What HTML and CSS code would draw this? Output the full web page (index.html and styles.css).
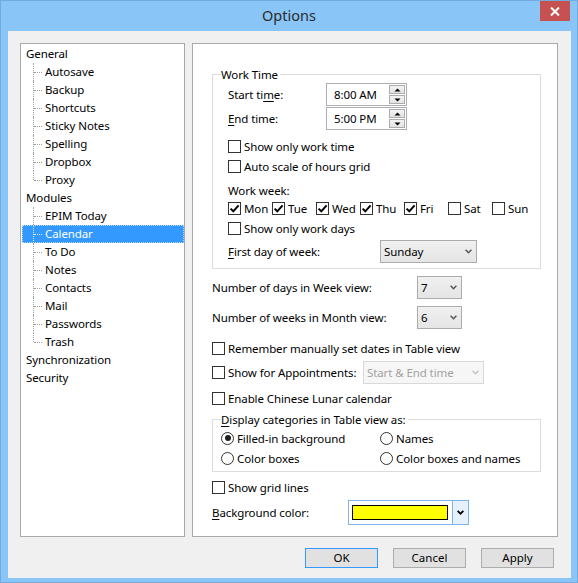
FILE: index.html
```html
<!DOCTYPE html>
<html lang="en">
<head>
<meta charset="utf-8">
<title>Options</title>
<link rel="stylesheet" href="styles.css">
</head>
<body>
<div class="window">
  <header class="titlebar">
    <div class="title">Options</div>
    <div class="close" aria-label="Close">
      <svg width="10" height="9" viewBox="0 0 10 9"><path d="M1 0.5 L9 8.5 M9 0.5 L1 8.5" stroke="#fff" stroke-width="2" fill="none"/></svg>
    </div>
  </header>
  <div class="client">
    <div class="main">
      <div class="tree">
        <div class="node">General</div>
        <div class="kids">
          <div class="leaf">Autosave</div>
          <div class="leaf">Backup</div>
          <div class="leaf">Shortcuts</div>
          <div class="leaf">Sticky Notes</div>
          <div class="leaf">Spelling</div>
          <div class="leaf">Dropbox</div>
          <div class="leaf">Proxy</div>
        </div>
        <div class="node">Modules</div>
        <div class="kids">
          <div class="leaf">EPIM Today</div>
          <div class="leaf selected">Calendar</div>
          <div class="leaf">To Do</div>
          <div class="leaf">Notes</div>
          <div class="leaf">Contacts</div>
          <div class="leaf">Mail</div>
          <div class="leaf">Passwords</div>
          <div class="leaf">Trash</div>
        </div>
        <div class="node">Synchronization</div>
        <div class="node">Security</div>
      </div>

      <div class="panel">
        <div class="group work">
          <div class="group-title">Work Time</div>
          <div class="row time-row">
            <span class="lbl lbl-time">Start ti<u>m</u>e:</span>
            <div class="spin">
              <span class="spin-val">8:00 AM</span>
              <span class="spin-btns">
                <span class="sb"><svg width="7" height="4" viewBox="0 0 7 4"><path d="M0.5 3.5 L3.5 0.5 L6.5 3.5Z" fill="#000"/></svg></span>
                <span class="sb"><svg width="7" height="4" viewBox="0 0 7 4"><path d="M0.5 0.5 L3.5 3.5 L6.5 0.5Z" fill="#000"/></svg></span>
              </span>
            </div>
          </div>
          <div class="row time-row">
            <span class="lbl lbl-time"><u>E</u>nd time:</span>
            <div class="spin">
              <span class="spin-val">5:00 PM</span>
              <span class="spin-btns">
                <span class="sb"><svg width="7" height="4" viewBox="0 0 7 4"><path d="M0.5 3.5 L3.5 0.5 L6.5 3.5Z" fill="#000"/></svg></span>
                <span class="sb"><svg width="7" height="4" viewBox="0 0 7 4"><path d="M0.5 0.5 L3.5 3.5 L6.5 0.5Z" fill="#000"/></svg></span>
              </span>
            </div>
          </div>
          <div class="row chk-row first-chk"><span class="chk"></span><span>Show only work time</span></div>
          <div class="row chk-row"><span class="chk"></span><span>Auto scale of hours grid</span></div>
          <div class="row ww-label">Work week:</div>
          <div class="row days">
            <span class="day"><span class="chk"><svg width="11" height="11" viewBox="0 0 11 11"><path d="M1.6 5.6 L4.3 8.3 L9.6 2.4" fill="none" stroke="#000" stroke-width="2"/></svg></span>Mon</span>
            <span class="day"><span class="chk"><svg width="11" height="11" viewBox="0 0 11 11"><path d="M1.6 5.6 L4.3 8.3 L9.6 2.4" fill="none" stroke="#000" stroke-width="2"/></svg></span>Tue</span>
            <span class="day"><span class="chk"><svg width="11" height="11" viewBox="0 0 11 11"><path d="M1.6 5.6 L4.3 8.3 L9.6 2.4" fill="none" stroke="#000" stroke-width="2"/></svg></span>Wed</span>
            <span class="day"><span class="chk"><svg width="11" height="11" viewBox="0 0 11 11"><path d="M1.6 5.6 L4.3 8.3 L9.6 2.4" fill="none" stroke="#000" stroke-width="2"/></svg></span>Thu</span>
            <span class="day"><span class="chk"><svg width="11" height="11" viewBox="0 0 11 11"><path d="M1.6 5.6 L4.3 8.3 L9.6 2.4" fill="none" stroke="#000" stroke-width="2"/></svg></span>Fri</span>
            <span class="day"><span class="chk"></span>Sat</span>
            <span class="day"><span class="chk"></span>Sun</span>
          </div>
          <div class="row chk-row"><span class="chk"></span><span>Show only work days</span></div>
          <div class="row combo-row first-day">
            <span class="lbl lbl-first"><u>F</u>irst day of week:</span>
            <div class="combo combo-day"><span>Sunday</span><svg width="7" height="5" viewBox="0 0 7 5"><path d="M0.6 0.8 L3.5 3.7 L6.4 0.8" fill="none" stroke="#555" stroke-width="1.5"/></svg></div>
          </div>
        </div>

        <div class="row combo-row count-row">
          <span class="lbl lbl-count">Number of days in Week view:</span>
          <div class="combo combo-num"><span>7</span><svg width="7" height="5" viewBox="0 0 7 5"><path d="M0.6 0.8 L3.5 3.7 L6.4 0.8" fill="none" stroke="#555" stroke-width="1.5"/></svg></div>
        </div>
        <div class="row combo-row count-row">
          <span class="lbl lbl-count">Number of weeks in Month view:</span>
          <div class="combo combo-num"><span>6</span><svg width="7" height="5" viewBox="0 0 7 5"><path d="M0.6 0.8 L3.5 3.7 L6.4 0.8" fill="none" stroke="#555" stroke-width="1.5"/></svg></div>
        </div>
        <div class="row chk-row remember"><span class="chk"></span><span>Remember manually set dates in Table view</span></div>
        <div class="row combo-row appt">
          <span class="chk"></span><span class="lbl lbl-appt">Show for Appointments:</span>
          <div class="combo combo-appt disabled"><span>Start &amp; End time</span><svg width="7" height="5" viewBox="0 0 7 5"><path d="M0.6 0.8 L3.5 3.7 L6.4 0.8" fill="none" stroke="#C4C4C4" stroke-width="1.5"/></svg></div>
        </div>
        <div class="row chk-row lunar"><span class="chk"></span><span>Enable Chinese Lunar calendar</span></div>

        <div class="group display">
          <div class="group-title"><u>D</u>isplay categories in Table view as:</div>
          <div class="radios">
            <div class="row chk-row"><span class="radio on"></span><span>Filled-in background</span></div>
            <div class="row chk-row"><span class="radio"></span><span>Names</span></div>
            <div class="row chk-row"><span class="radio"></span><span>Color boxes</span></div>
            <div class="row chk-row"><span class="radio"></span><span>Color boxes and names</span></div>
          </div>
        </div>

        <div class="row chk-row gridlines"><span class="chk"></span><span>Show grid lines</span></div>
        <div class="row bg-row">
          <span class="lbl lbl-bg"><u>B</u>ackground color:</span>
          <div class="color-combo">
            <span class="swatch"></span>
            <span class="color-btn"><svg width="7" height="5" viewBox="0 0 7 5"><path d="M0.6 0.8 L3.5 3.7 L6.4 0.8" fill="none" stroke="#000" stroke-width="1.8"/></svg></span>
          </div>
        </div>
      </div>
    </div>
    <div class="buttons">
      <button class="btn default">OK</button>
      <button class="btn">Cancel</button>
      <button class="btn">Apply</button>
    </div>
  </div>
</div>
</body>
</html>
```

FILE: styles.css
```css
* { box-sizing: border-box; }
html, body { margin: 0; padding: 0; }
body {
  font-family: "Noto Sans", "Open Sans", sans-serif;
  font-size: 11.5px;
  letter-spacing: -0.1px;
  color: #000;
  background: #fff;
}
u { text-decoration: underline; text-underline-offset: 2px; }

.window {
  width: 578px;
  height: 583px;
  background: #8AC5F8;
  box-shadow: inset 0 0 0 1px #72ABE0;
  display: flex;
  flex-direction: column;
  overflow: hidden;
}
.titlebar {
  height: 31px;
  flex: none;
  display: grid;
  grid-template-columns: 1fr auto 1fr;
  align-items: start;
}
.title {
  grid-column: 2;
  font-size: 14.5px;
  letter-spacing: 0;
  line-height: 31px;
  color: #2B2B2B;
}
.close {
  grid-column: 3;
  justify-self: end;
  width: 30px;
  height: 20px;
  margin: 1px 8px 0 0;
  background: #C75050;
  display: flex;
  align-items: center;
  justify-content: center;
}

.client {
  flex: none;
  height: 547px;
  margin: 0 7px 0 8px;
  background: #F0F0F0;
  padding: 12px 13px 10px 12px;
  display: flex;
  flex-direction: column;
}
.main {
  display: flex;
  gap: 7px;
  height: 494px;
  flex: none;
}

/* tree */
.tree {
  width: 165px;
  flex: none;
  background: #fff;
  border: 1px solid #A9A9A9;
  padding: 1px 0;
}
.node {
  height: 18px;
  line-height: 18px;
  padding-left: 5px;
  white-space: nowrap;
}
.leaf {
  position: relative;
  height: 18px;
  line-height: 18px;
  margin-left: 1px;
  padding-left: 23px;
  white-space: nowrap;
}
.leaf::before {
  content: "";
  position: absolute;
  left: 11px;
  top: 0;
  height: 18px;
  border-left: 1px dotted #A0A0A0;
}
.leaf:last-child::before { height: 9px; }
.leaf::after {
  content: "";
  position: absolute;
  left: 12px;
  top: 9px;
  width: 8px;
  border-top: 1px dotted #A0A0A0;
}
.leaf.selected {
  background: #3399FF;
  color: #fff;
  outline: 1px dotted #B5D9FF;
  outline-offset: -1px;
}
.leaf.selected::before, .leaf.selected::after { border-color: #D8EBFF; }

/* panel */
.panel {
  flex: 1;
  background: #fff;
  border: 1px solid #A9A9A9;
  padding: 30px 16px 0 19px;
  display: flex;
  flex-direction: column;
}
.row {
  display: flex;
  align-items: center;
  white-space: nowrap;
}
.group {
  border: 1px solid #DCDCDC;
}
.group-title {
  height: 16px;
  line-height: 16px;
  margin-top: -8px;
  background: #fff;
  width: max-content;
  padding-right: 2px;
}
.group.work { padding: 0 0 5px 15px; }
.group.work .group-title { margin-left: -7px; }

.time-row { height: 23px; }
.time-row + .time-row { margin-top: 1px; }
.lbl-time { width: 98px; }
.spin {
  width: 81px;
  height: 23px;
  border: 1px solid #ABADB3;
  background: #fff;
  display: flex;
  align-items: center;
  justify-content: space-between;
  padding: 0 1px 0 7px;
}
.spin-btns {
  display: flex;
  flex-direction: column;
  gap: 1px;
}
.sb {
  width: 16px;
  height: 9px;
  border: 1px solid #ACACAC;
  background: linear-gradient(#F4F4F4, #E2E2E2);
  display: flex;
  align-items: center;
  justify-content: center;
}

.chk-row { height: 20px; }
.first-chk { margin-top: 6px; }
.chk {
  width: 13px;
  height: 13px;
  flex: none;
  border: 1px solid #333;
  background: #fff;
  margin-right: 3px;
  display: flex;
  align-items: center;
  justify-content: center;
}
.ww-label { height: 18px; margin-top: 5px; }
.days {
  height: 19px;
  display: grid;
  grid-template-columns: repeat(7, 44px);
  align-items: center;
}
.day { display: flex; align-items: center; }

.combo-row { height: 23px; }
.first-day { margin-top: 2px; }
.lbl-first { width: 152px; }
.combo {
  height: 23px;
  border: 1px solid #ACACAC;
  background: linear-gradient(#F0F0F0, #E5E5E5);
  display: flex;
  align-items: center;
  justify-content: space-between;
  padding: 0 4px 0 3px;
}
.combo-day { width: 97px; }
.combo-num { width: 45px; }
.combo-appt { width: 121px; }
.combo.disabled {
  background: #F6F6F6;
  border-color: #D9D9D9;
  color: #A2A2A2;
}

.count-row { margin-top: 7px; }
.lbl-count { width: 205px; }
.remember { margin-top: 9px; }
.appt { margin-top: 3px; }
.lbl-appt { width: 135px; }
.lunar { margin-top: 4px; }

.group.display {
  margin-top: 11px;
  padding: 0 0 3px 8px;
}
.radios {
  display: grid;
  grid-template-columns: 159px 1fr;
}
.radio {
  width: 13px;
  height: 13px;
  flex: none;
  border: 1px solid #333;
  border-radius: 50%;
  background: #fff;
  margin-right: 3px;
  display: flex;
  align-items: center;
  justify-content: center;
}
.radio.on::after {
  content: "";
  width: 6px;
  height: 6px;
  border-radius: 50%;
  background: #1E1E1E;
}

.gridlines { margin-top: 5px; }
.bg-row { height: 25px; margin-top: 3px; }
.lbl-bg { width: 136px; }
.color-combo {
  width: 121px;
  height: 25px;
  border: 1px solid #7EB4EA;
  background: #fff;
  display: flex;
  align-items: stretch;
  padding-left: 3px;
}
.swatch {
  width: 96px;
  height: 15px;
  align-self: center;
  border: 1px solid #000;
  background: #FFFF00;
  margin-right: 4px;
}
.color-btn {
  width: 16px;
  border-left: 1px solid #7EB4EA;
  background: #E5F1FB;
  display: flex;
  align-items: center;
  justify-content: center;
}

/* buttons */
.buttons {
  margin-top: 11px;
  height: 20px;
  display: flex;
  justify-content: flex-end;
  gap: 15px;
  padding-right: 4px;
}
.btn {
  width: 73px;
  height: 20px;
  padding: 0;
  font: inherit;
  color: #000;
  border: 1px solid #ADADAD;
  background: #E1E1E1;
  line-height: 18px;
  text-align: center;
}
.btn.default { border-color: #3399FF; }
```
